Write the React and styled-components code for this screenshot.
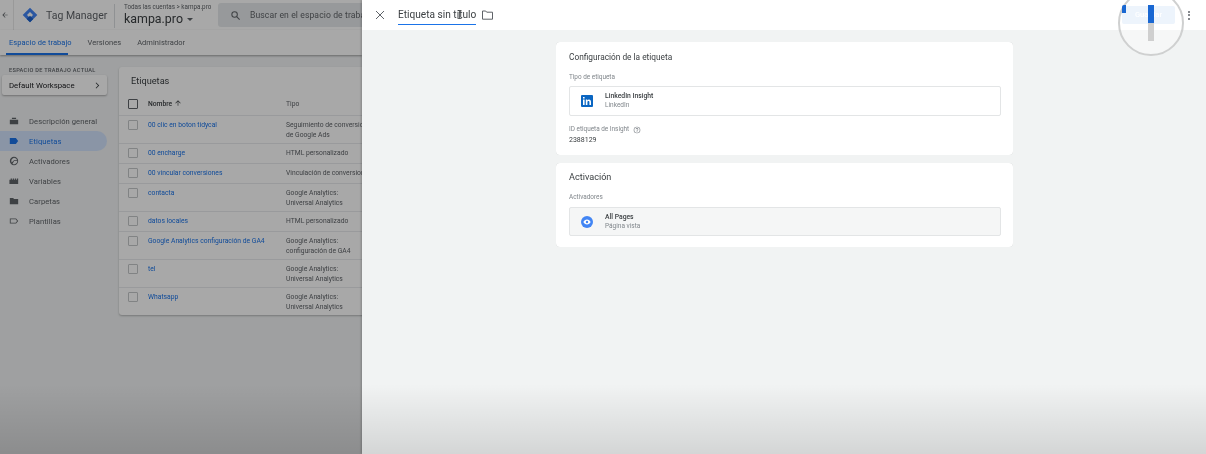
import React from 'react';
import styled, { createGlobalStyle } from 'styled-components';

const GlobalStyle = createGlobalStyle`
  html, body {
    margin: 0;
    padding: 0;
    background: #f1f3f3;
    overflow: hidden;
  }
  * {
    box-sizing: border-box;
  }
`;

const Page = styled.div`
  position: relative;
  display: flex;
  width: 1206px;
  height: 454px;
  overflow: hidden;
  font-family: Roboto, 'Liberation Sans', sans-serif;
  color: #202124;
`;

// Left side: the workspace behind the drawer
const Workspace = styled.div`
  position: relative;
  flex: 0 0 362px;
  height: 454px;
  overflow: hidden;
  background: #f1f3f4;
  filter: blur(0.55px);
`;

const Dim = styled.div`
  position: absolute;
  inset: 0;
  background: rgba(0, 0, 0, 0.34);
`;

const TopBar = styled.div`
  display: flex;
  align-items: center;
  height: 30px;
  background: #fff;
`;

const BackArrow = styled.div`
  flex: 0 0 14px;
  height: 30px;
  display: flex;
  align-items: center;
  padding-left: 1px;
  border-right: 1px solid #e8e8e8;
  margin-right: 8px;
`;

const Logo = styled.div`
  flex: 0 0 24px;
  height: 16px;
  margin-top: -1px;
`;

const Product = styled.div`
  flex: 0 0 69px;
  font-size: 10.5px;
  color: #5f6368;
  white-space: nowrap;
  border-right: 1px solid #dadce0;
  height: 24px;
  line-height: 23px;
  margin-top: 1px;
`;

const Account = styled.div`
  flex: 0 0 103px;
  padding-left: 9px;
  white-space: nowrap;
`;

const Crumb = styled.div`
  font-size: 6.3px;
  line-height: 8px;
  color: #5f6368;
  margin-top: -1px;
`;

const AccountName = styled.div`
  font-size: 12.4px;
  line-height: 16px;
  color: #3c4043;
`;

const Caret = styled.span`
  display: inline-block;
  margin-left: 4px;
  border-left: 3px solid transparent;
  border-right: 3px solid transparent;
  border-top: 3px solid #5f6368;
  vertical-align: middle;
`;

const Search = styled.div`
  flex: 1;
  display: flex;
  align-items: center;
  gap: 9px;
  height: 24px;
  padding-left: 12px;
  background: #e6e9eb;
  border-radius: 3px 0 0 3px;
  font-size: 8.6px;
  color: #5f6368;
  white-space: nowrap;
  overflow: hidden;
  letter-spacing: 0.1px;

  > svg {
    flex: none;
  }
`;

const Tabs = styled.div`
  display: flex;
  gap: 16px;
  height: 25px;
  padding-left: 9px;
  background: #fff;
  box-shadow: 0 1px 2px rgba(0, 0, 0, 0.35);
  position: relative;
`;

const Tab = styled.div`
  position: relative;
  font-size: 7.5px;
  line-height: 25px;
  letter-spacing: 0.05px;
  color: ${props => (props.active ? '#1a73e8' : '#5f6368')};
  &::after {
    content: '';
    display: ${props => (props.active ? 'block' : 'none')};
    position: absolute;
    left: -3px;
    right: 4px;
    bottom: 0;
    height: 2px;
    background: #1a73e8;
  }
`;

const Body = styled.div`
  display: flex;
`;

const Sidebar = styled.div`
  flex: 0 0 119px;
  padding-top: 11px;
`;

const SideLabel = styled.div`
  font-size: 5.6px;
  line-height: 8px;
  font-weight: 500;
  letter-spacing: 0.3px;
  color: #5f6368;
  padding-left: 9px;
  white-space: nowrap;
`;

const WorkspaceButton = styled.div`
  display: flex;
  align-items: center;
  justify-content: space-between;
  width: 105px;
  height: 20px;
  margin: 1px 0 16px 2px;
  padding: 0 5px 0 7px;
  background: #fff;
  border-radius: 2px;
  box-shadow: 0 1px 2px rgba(0, 0, 0, 0.3);
  font-size: 7.8px;
  color: #202124;
`;

const NavItem = styled.div`
  display: flex;
  align-items: center;
  width: 107px;
  height: 20px;
  padding-left: 9px;
  gap: 10px;
  font-size: 7.6px;
  letter-spacing: 0.08px;
  color: ${props => (props.active ? '#1a73e8' : '#5f6368')};
  background: ${props => (props.active ? '#d2e3fc' : 'transparent')};
  border-radius: 0 10px 10px 0;
  white-space: nowrap;
`;

const Card = styled.div`
  flex: 0 0 290px;
  height: 248px;
  margin-top: 12px;
  background: #fff;
  border-radius: 3px 0 0 3px;
  box-shadow: 0 1px 2px rgba(0, 0, 0, 0.25);
`;

const CardTitle = styled.div`
  height: 28px;
  padding: 8px 0 0 12px;
  font-size: 9.2px;
  line-height: 11px;
  color: #3c4043;
`;

const TableRow = styled.div`
  display: flex;
  height: ${props => props.h}px;
  border-top: ${props => (props.head ? 'none' : '1px solid #e8eaed')};
  padding: 4px 0 0 9px;
  font-size: 6.75px;
  line-height: 10px;
  color: #5f6368;
`;

const Check = styled.div`
  flex: 0 0 10px;
  height: 10px;
  border: 1px solid ${props => (props.head ? '#5f6368' : '#c4c7c9')};
  border-radius: 1px;
`;

const NameCell = styled.div`
  flex: 0 0 148px;
  display: flex;
  align-items: flex-start;
  gap: 2px;
  padding-left: 10px;
  white-space: nowrap;
  font-weight: ${props => (props.head ? 500 : 400)};
  color: ${props => (props.head ? '#3c4043' : '#1a73e8')};
`;

const TypeCell = styled.div`
  flex: 1;
  white-space: nowrap;
  overflow: hidden;
  color: #5f6368;
`;

// Right side: the tag drawer
const Drawer = styled.div`
  flex: 1;
  height: 454px;
  background: #f1f3f3;
  box-shadow: -1px 0 2px rgba(0, 0, 0, 0.2);
  z-index: 1;
  filter: blur(0.3px);
`;

const DrawerBar = styled.div`
  display: flex;
  align-items: center;
  height: 30px;
  padding: 0 0 0 13px;
  background: #fff;
`;

const CloseBox = styled.div`
  flex: 0 0 23px;
  height: 10px;
  display: flex;
`;

const TitleInput = styled.div`
  position: relative;
  flex: 0 0 78px;
  height: 18px;
  margin-top: 1px;
  font-size: 10.15px;
  line-height: 15px;
  color: #3c4043;
  white-space: nowrap;
  border-bottom: 1px solid #1a73e8;
`;

const Cursor = styled.svg`
  position: absolute;
  left: 59px;
  top: 3px;
`;

const FolderBox = styled.div`
  flex: 0 0 11px;
  margin-left: 6px;
  height: 10px;
  display: flex;
`;

const SaveArea = styled.div`
  margin-left: auto;
  display: flex;
  align-items: center;
  gap: 13px;
  padding-right: 16px;
`;

const SaveButton = styled.div`
  width: 53px;
  height: 18px;
  border-radius: 2px;
  background: #e3eefb;
  color: #fff;
  font-size: 7.6px;
  font-weight: 500;
  line-height: 18px;
  text-align: center;
`;

const Kebab = styled.div`
  display: flex;
  flex-direction: column;
  gap: 1.5px;
  width: 2px;
`;

const Dot = styled.div`
  width: 2px;
  height: 2px;
  background: #5f6368;
  border-radius: 50%;
`;

const ClickRing = styled.div`
  position: absolute;
  left: 1118px;
  top: -10px;
  width: 66px;
  height: 66px;
  border-radius: 50%;
  border: 2px solid #cfd0d0;
  background: rgba(255, 255, 255, 0.35);
  z-index: 2;
`;

const RingCorner = styled.div`
  position: absolute;
  left: 1122px;
  top: 5px;
  width: 4px;
  height: 8px;
  background: #1967d2;
  border-radius: 2px 0 0 0;
  z-index: 3;
`;

const RingBar = styled.div`
  position: absolute;
  left: 1148px;
  top: ${props => props.top}px;
  width: 6px;
  height: ${props => props.h}px;
  background: ${props => props.color};
  z-index: 3;
`;

const DrawerContent = styled.div`
  display: flex;
  flex-direction: column;
  gap: 8px;
  width: 457px;
  margin: 12px 0 0 194px;
`;

const Panel = styled.div`
  height: ${props => props.h}px;
  padding: ${props => props.top}px 12px 0 13px;
  background: #fff;
  border-radius: 4px;
  box-shadow: 0 0 0.5px rgba(0, 0, 0, 0.2);
`;

const PanelTitle = styled.div`
  font-size: ${props => props.size}px;
  line-height: 12px;
  color: #3c4043;
  margin-bottom: 9px;
`;

const FieldLabel = styled.div`
  display: flex;
  align-items: center;
  gap: 4px;
  font-size: 6.4px;
  line-height: 9px;
  padding-top: 1px;
  color: #80868b;
`;

const SelectBox = styled.div`
  display: flex;
  align-items: center;
  height: ${props => props.h}px;
  margin-top: ${props => props.offset}px;
  padding-left: 11px;
  gap: 12px;
  background: ${props => (props.filled ? '#f5f6f6' : '#fff')};
  border: 1px solid #e3e5e6;
  border-radius: 2px;
`;

const BoxName = styled.div`
  font-size: 6.8px;
  line-height: 9px;
  font-weight: 500;
  color: #3c4043;
`;

const BoxSub = styled.div`
  font-size: 6.5px;
  line-height: 9px;
  color: #80868b;
`;

const FieldValue = styled.div`
  font-size: 7px;
  line-height: 10px;
  color: #3c4043;
  margin-top: 1px;
`;

const FieldGroup = styled.div`
  margin-top: 8px;
`;

const Shade = styled.div`
  position: absolute;
  left: 0;
  right: 0;
  bottom: 0;
  height: 70px;
  background: linear-gradient(to bottom, rgba(0, 0, 0, 0), rgba(0, 0, 0, 0.12));
  pointer-events: none;
  z-index: 4;
`;

const rows = [
  { h: 28, name: '00 clic en boton tidycal', type: ['Seguimiento de conversiones', 'de Google Ads'] },
  { h: 20, name: '00 encharge', type: ['HTML personalizado'] },
  { h: 20, name: '00 vincular conversiones', type: ['Vinculación de conversiones'] },
  { h: 28, name: 'contacta', type: ['Google Analytics:', 'Universal Analytics'] },
  { h: 20, name: 'datos locales', type: ['HTML personalizado'] },
  { h: 28, name: 'Google Analytics configuración de GA4', type: ['Google Analytics:', 'configuración de GA4'] },
  { h: 28, name: 'tel', type: ['Google Analytics:', 'Universal Analytics'] },
  { h: 28, name: 'Whatsapp', type: ['Google Analytics:', 'Universal Analytics'] },
];

const NavIcon = ({ d, color = '#5f6368' }) => (
  <svg width="10" height="10" viewBox="0 0 24 24" fill={color}>
    <path d={d} />
  </svg>
);

const nav = [
  { label: 'Descripción general', d: 'M2 9h20v11H2zM7 4h10v3H7z' },
  {
    label: 'Etiquetas',
    active: true,
    d: 'M2 5h14.5L22 12l-5.5 7H2z',
  },
  {
    label: 'Activadores',
    d: 'M12 2a10 10 0 1 0 0 20 10 10 0 0 0 0-20zm0 2a8 8 0 0 1 7.7 6H12l-5.5 5.5A8 8 0 0 1 12 4zm7.9 8a8 8 0 0 1-11.7 7l4-7z',
  },
  { label: 'Variables', d: 'M1 9h3V6h3v3h2V6h3v3h2V6h3v3h2V6h3v13H1z' },
  { label: 'Carpetas', d: 'M2 5h8l2 2h10v13H2z' },
  {
    label: 'Plantillas',
    d: 'M2 6h15l5 6-5 6H2zm2 2v8h12l3.4-4L16 8z',
  },
];

const App = () => (
  <Page>
    <GlobalStyle />
    <Workspace>
      <TopBar>
        <BackArrow>
          <svg width="8" height="8" viewBox="0 0 24 24" fill="#5f6368">
            <path d="M20 11H7.8l5.6-5.6L12 4l-8 8 8 8 1.4-1.4L7.8 13H20z" />
          </svg>
        </BackArrow>
        <Logo>
          <svg width="16" height="16" viewBox="0 0 24 24">
            <path d="M12 1 1 12l11 11 11-11z" fill="#4285f4" />
            <path d="M12 7.5 7.5 12l4.5 4.5 4.5-4.5z" fill="#fff" />
            <path d="M12 23l-5-5 5-5 5 5z" fill="#1a5fc8" />
          </svg>
        </Logo>
        <Product>Tag Manager</Product>
        <Account>
          <Crumb>Todas las cuentas &gt; kampa.pro</Crumb>
          <AccountName>
            kampa.pro
            <Caret />
          </AccountName>
        </Account>
        <Search>
          <svg width="11" height="11" viewBox="0 0 24 24" fill="none" stroke="#5f6368" strokeWidth="2.2">
            <circle cx="10" cy="10" r="6" />
            <path d="M14.5 14.5 21 21" />
          </svg>
          Buscar en el espacio de trabajo
        </Search>
      </TopBar>
      <Tabs>
        <Tab active>Espacio de trabajo</Tab>
        <Tab>Versiones</Tab>
        <Tab>Administrador</Tab>
      </Tabs>
      <Body>
        <Sidebar>
          <SideLabel>ESPACIO DE TRABAJO ACTUAL</SideLabel>
          <WorkspaceButton>
            Default Workspace
            <svg width="9" height="9" viewBox="0 0 24 24" fill="#3c4043">
              <path d="M8.6 4 7 5.6l6.4 6.4L7 18.4 8.6 20l8-8z" />
            </svg>
          </WorkspaceButton>
          {nav.map(item => (
            <NavItem key={item.label} active={item.active}>
              <NavIcon d={item.d} color={item.active ? '#1a73e8' : '#5f6368'} />
              {item.label}
            </NavItem>
          ))}
        </Sidebar>
        <Card>
          <CardTitle>Etiquetas</CardTitle>
          <TableRow head h={20}>
            <Check head />
            <NameCell head>
              Nombre
              <svg width="8" height="8" viewBox="0 0 24 24" fill="#3c4043">
                <path d="M4 12l1.4 1.4L11 7.8V20h2V7.8l5.6 5.6L20 12l-8-8z" />
              </svg>
            </NameCell>
            <TypeCell>Tipo</TypeCell>
          </TableRow>
          {rows.map(row => (
            <TableRow key={row.name} h={row.h}>
              <Check />
              <NameCell>{row.name}</NameCell>
              <TypeCell>
                {row.type.map(line => (
                  <div key={line}>{line}</div>
                ))}
              </TypeCell>
            </TableRow>
          ))}
        </Card>
      </Body>
      <Dim />
    </Workspace>

    <Drawer>
      <DrawerBar>
        <CloseBox>
          <svg width="10" height="10" viewBox="0 0 10 10" stroke="#5f6368" strokeWidth="1">
            <path d="M1 1l8 8M9 1l-8 8" />
          </svg>
        </CloseBox>
        <TitleInput>
          Etiqueta sin título
          <Cursor width="5" height="9" viewBox="0 0 5 9" stroke="#3c4043" strokeWidth="0.8" fill="none">
            <path d="M0.5 0.5h4M2.5 0.5v8M0.5 8.5h4" />
          </Cursor>
        </TitleInput>
        <FolderBox>
          <svg width="11" height="10" viewBox="0 0 11 10" fill="none" stroke="#5f6368" strokeWidth="1">
            <path d="M.5 1h3.2l1 1.2h5.8v7H.5z" />
          </svg>
        </FolderBox>
        <SaveArea>
          <SaveButton>Guardar</SaveButton>
          <Kebab>
            <Dot />
            <Dot />
            <Dot />
          </Kebab>
        </SaveArea>
      </DrawerBar>
      <DrawerContent>
        <Panel h={113} top={9}>
          <PanelTitle size={8.3}>Configuración de la etiqueta</PanelTitle>
          <FieldLabel>Tipo de etiqueta</FieldLabel>
          <SelectBox h={30} offset={4}>
            <svg width="12" height="12" viewBox="0 0 12 12">
              <rect width="12" height="12" rx="1" fill="#0a66c2" />
              <path d="M2 4.6h1.6V10H2zM2 2h1.6v1.6H2zM4.8 4.6h1.5v.8c.4-.6 1-.9 1.7-.9 1.4 0 2 .9 2 2.4V10H8.4V7.2c0-.7-.3-1.2-.9-1.2-.7 0-1.1.5-1.1 1.2V10H4.8z" fill="#fff" />
            </svg>
            <div>
              <BoxName>LinkedIn Insight</BoxName>
              <BoxSub>LinkedIn</BoxSub>
            </div>
          </SelectBox>
          <FieldGroup>
            <FieldLabel>
              ID etiqueta de Insight
              <svg width="8" height="8" viewBox="0 0 24 24" fill="#80868b">
                <path d="M11 18h2v-2h-2zm1-16a10 10 0 1 0 0 20 10 10 0 0 0 0-20zm0 18a8 8 0 1 1 0-16 8 8 0 0 1 0 16zm0-14a4 4 0 0 0-4 4h2a2 2 0 1 1 4 0c0 2-3 1.8-3 5h2c0-2.3 3-2.5 3-5a4 4 0 0 0-4-4z" />
              </svg>
            </FieldLabel>
            <FieldValue>2388129</FieldValue>
          </FieldGroup>
        </Panel>
        <Panel h={84} top={8}>
          <PanelTitle size={9.1}>Activación</PanelTitle>
          <FieldLabel>Activadores</FieldLabel>
          <SelectBox filled h={29} offset={5}>
            <svg width="12" height="12" viewBox="0 0 12 12">
              <circle cx="6" cy="6" r="6" fill="#4285f4" />
              <path d="M6 3.6C4.4 3.6 3 4.6 2.4 6 3 7.4 4.4 8.4 6 8.4S9 7.4 9.6 6C9 4.6 7.6 3.6 6 3.6z" fill="#fff" />
              <circle cx="6" cy="6" r="1.2" fill="#4285f4" />
            </svg>
            <div>
              <BoxName>All Pages</BoxName>
              <BoxSub>Página vista</BoxSub>
            </div>
          </SelectBox>
        </Panel>
      </DrawerContent>
    </Drawer>

    <RingCorner />
    <ClickRing />
    <RingBar top={5} h={18} color="#1967d2" />
    <RingBar top={23} h={18} color="#cfcfcf" />
    <Shade />
  </Page>
);

export default App;
